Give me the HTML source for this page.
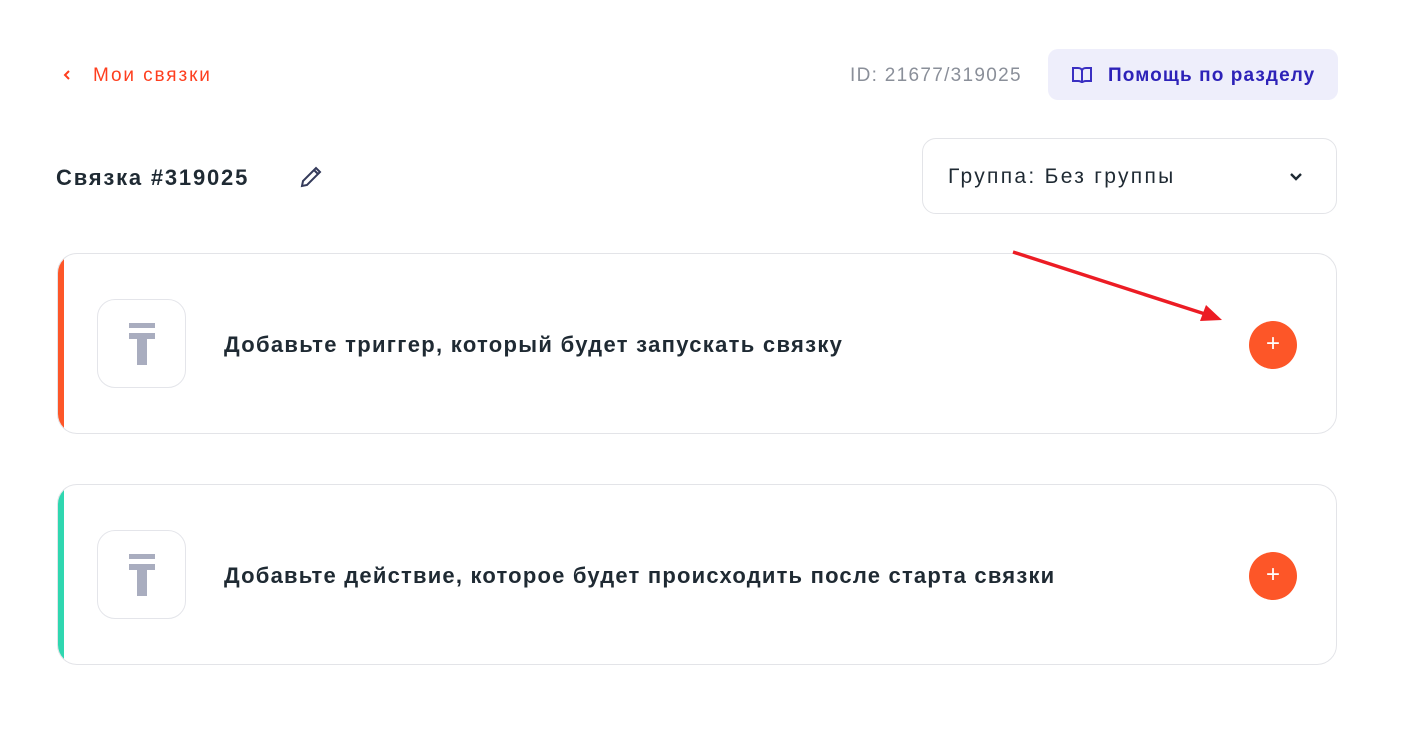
<!DOCTYPE html>
<html><head><meta charset="utf-8"><style>
*{margin:0;padding:0;box-sizing:border-box}
body{width:1420px;height:744px;background:#fff;font-family:"Liberation Sans",sans-serif;position:relative;overflow:hidden;color:#1f2a33}
.a{position:absolute}
.card{position:absolute;left:57px;width:1280px;height:181px;border:1px solid #e3e4e8;border-radius:20px;overflow:hidden;background:#fff}
.stripe{position:absolute;left:0;top:0;bottom:0;width:6px}
.ib{position:absolute;left:39px;top:45px;width:89px;height:89px;border:1px solid #e4e5ea;border-radius:18px}
.ct{position:absolute;left:166px;top:78px;font-size:22px;font-weight:bold;color:#1f2a33;white-space:nowrap}
.plus{position:absolute;left:1191px;top:67px;width:48px;height:48px;border-radius:50%;background:#fd5628;color:#fff;font-size:24px;text-align:center;line-height:46px}
</style></head><body>
<svg class="a" style="left:62px;top:68px" width="10" height="14" viewBox="0 0 10 14" fill="none" stroke="#fe3e1e" stroke-width="2"><path d="M7 3L3 7l4 4"/></svg>
<div class="a" style="left:93px;top:65px;color:#fe3e1e;font-size:19px;letter-spacing:1.9px;white-space:nowrap">Мои связки</div>
<div class="a" style="left:850px;top:65px;color:#8a8f99;font-size:19px;letter-spacing:1.3px;white-space:nowrap">ID: 21677/319025</div>
<div class="a" style="left:1048px;top:49px;width:290px;height:51px;background:#eeeefb;border-radius:10px"></div>
<svg class="a" style="left:1071px;top:64px" width="22" height="22" viewBox="0 0 22 22" fill="none" stroke="#3a2fc2" stroke-width="2"><path d="M2 4h5c2 0 4 1 4 3v12c0-1-2-2-4-2H2z M20 4h-5c-2 0-4 1-4 3v12c0-1 2-2 4-2h5z"/></svg>
<div class="a" style="left:1108px;top:65px;color:#2d22b8;font-size:19px;font-weight:bold;letter-spacing:1.1px;white-space:nowrap">Помощь по разделу</div>
<div class="a" style="left:56px;top:165px;font-size:22px;font-weight:bold;color:#1f2a33;letter-spacing:1.8px;white-space:nowrap">Связка #319025</div>
<svg class="a" style="left:298px;top:164px" width="26" height="26" viewBox="0 0 26 26" fill="none" stroke="#343a5a" stroke-width="2"><path d="M4 22l1-5L18 4l4 4L9 21z M16 6l4 4"/></svg>
<div class="a" style="left:922px;top:138px;width:415px;height:76px;border:1px solid #e3e4e8;border-radius:14px"></div>
<div class="a" style="left:948px;top:165px;font-size:21px;color:#1f2a33;letter-spacing:2.3px;white-space:nowrap">Группа: Без группы</div>
<svg class="a" style="left:1288px;top:171px" width="16" height="12" viewBox="0 0 16 12" fill="none" stroke="#1f2a33" stroke-width="2.4"><path d="M3 3l5 5 5-5"/></svg>
<div class="card" style="top:253px"><div class="stripe" style="background:#fd5628"></div>
<div class="ib"><svg width="89" height="89"><rect x="31" y="23" width="26" height="5" fill="#a9adbf"/><rect x="31" y="33" width="26" height="6" fill="#a9adbf"/><rect x="39" y="39" width="10" height="26" fill="#a9adbf"/></svg></div>
<div class="ct" style="letter-spacing:1.3px">Добавьте триггер, который будет запускать связку</div><div class="plus">+</div></div>
<div class="card" style="top:484px"><div class="stripe" style="background:#2fd7b0"></div>
<div class="ib"><svg width="89" height="89"><rect x="31" y="23" width="26" height="5" fill="#a9adbf"/><rect x="31" y="33" width="26" height="6" fill="#a9adbf"/><rect x="39" y="39" width="10" height="26" fill="#a9adbf"/></svg></div>
<div class="ct" style="letter-spacing:1.2px">Добавьте действие, которое будет происходить после старта связки</div><div class="plus">+</div></div>
<svg class="a" style="left:0;top:0" width="1420" height="744"><line x1="1013" y1="252" x2="1205" y2="314" stroke="#ec1c24" stroke-width="3.5"/><polygon points="1222,320 1200,321 1206,305" fill="#ec1c24"/></svg>
</body></html>
